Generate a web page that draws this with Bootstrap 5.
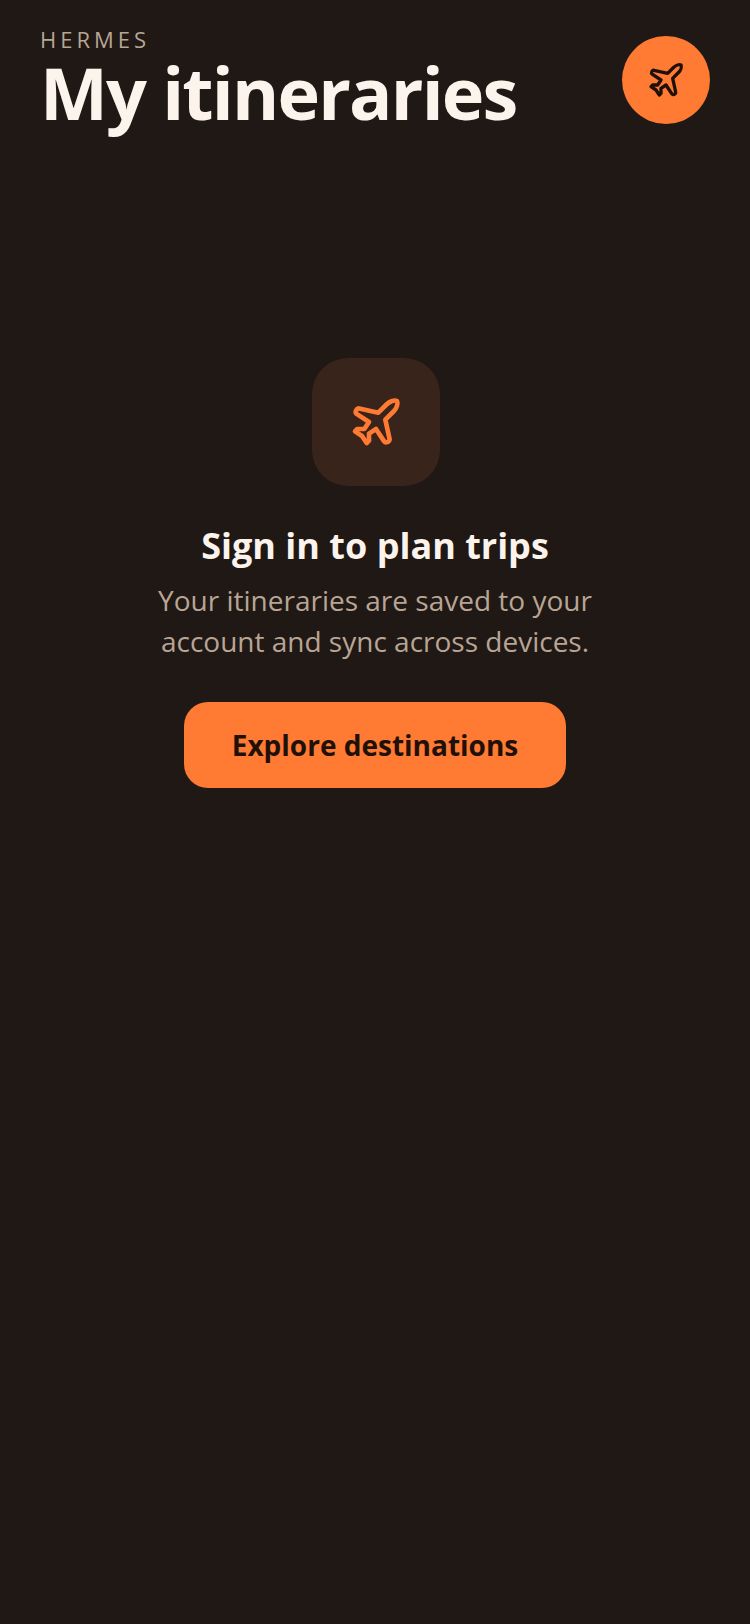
<!DOCTYPE html>
<html lang="en">
<head>
<meta charset="UTF-8" />
<meta name="viewport" content="width=device-width, initial-scale=1.0" />
<title>My itineraries</title>
<link rel="stylesheet" href="https://cdn.jsdelivr.net/npm/bootstrap@5.3.0/dist/css/bootstrap.min.css" />
<style>
   body {
   background: #1f1815;
   font-family: "Open Sans", sans-serif;
   min-height: 1624px;
   }
   .top-bar {
   padding: 26px 40px 0 40px;
   }
   .brand-label {
   color: #b8a594;
   font-size: 22px;
   line-height: 26px;
   letter-spacing: 4px;
   }
   .page-title {
   color: #fbf3ec;
   font-size: 72px;
   font-weight: 700;
   line-height: 80px;
   letter-spacing: -1.8px;
   margin: 0;
   }
   .round-btn {
   width: 88px;
   height: 88px;
   margin-top: 10px;
   background: #ff7a33;
   color: #1f1008;
   border-radius: 50%;
   }
   .empty-state {
   padding-top: 226px;
   }
   .icon-tile {
   width: 128px;
   height: 128px;
   background: #38241a;
   color: #ff7a33;
   border-radius: 36px;
   margin-left: 2px;
   margin-bottom: 36px;
   }
   .empty-title {
   color: #fbf3ec;
   font-size: 36px;
   font-weight: 700;
   line-height: 48px;
   margin-bottom: 10px;
   }
   .empty-text {
   color: #b8a594;
   font-size: 28px;
   line-height: 40.6px;
   margin-bottom: 41px;
   }
   .explore-btn {
   width: 382px;
   height: 86px;
   background: #ff7a33;
   color: #1f1008;
   font-size: 28px;
   font-weight: 700;
   border: 0;
   border-radius: 24px;
   }
   .explore-btn:hover {
   background: #ff7a33;
   color: #1f1008;
   }
</style>
</head>
<body>
   <div class="top-bar d-flex justify-content-between align-items-start">
      <div>
         <div class="brand-label">HERMES</div>
         <h1 class="page-title">My itineraries</h1>
      </div>
      <div class="round-btn d-flex align-items-center justify-content-center">
         <svg width="40" height="40" viewBox="0 0 24 24" fill="none" stroke="currentColor" stroke-width="2" stroke-linecap="round" stroke-linejoin="round"><path d="M17.8 19.2 16 11l3.5-3.5C21 6 21.5 4 21 3c-1-.5-3 0-4.5 1.5L13 8 4.8 6.2c-.5-.1-.9.1-1.1.5l-.3.5c-.2.5-.1 1 .3 1.3L9 12l-2 3H4l-1 1 3 2 2 3 1-1v-3l3-2 3.5 5.3c.3.4.8.5 1.3.3l.5-.2c.4-.3.6-.7.5-1.2z"/></svg>
      </div>
   </div>
   <div class="empty-state d-flex flex-column align-items-center text-center">
      <div class="icon-tile d-flex align-items-center justify-content-center">
         <svg width="56" height="56" viewBox="0 0 24 24" fill="none" stroke="currentColor" stroke-width="2" stroke-linecap="round" stroke-linejoin="round"><path d="M17.8 19.2 16 11l3.5-3.5C21 6 21.5 4 21 3c-1-.5-3 0-4.5 1.5L13 8 4.8 6.2c-.5-.1-.9.1-1.1.5l-.3.5c-.2.5-.1 1 .3 1.3L9 12l-2 3H4l-1 1 3 2 2 3 1-1v-3l3-2 3.5 5.3c.3.4.8.5 1.3.3l.5-.2c.4-.3.6-.7.5-1.2z"/></svg>
      </div>
      <h2 class="empty-title">Sign in to plan trips</h2>
      <p class="empty-text">Your itineraries are saved to your<br />account and sync across devices.</p>
      <button type="button" class="btn explore-btn">Explore destinations</button>
   </div>
   <script src="https://cdn.jsdelivr.net/npm/bootstrap@5.3.0/dist/js/bootstrap.bundle.min.js"></script>
</body>
</html>
